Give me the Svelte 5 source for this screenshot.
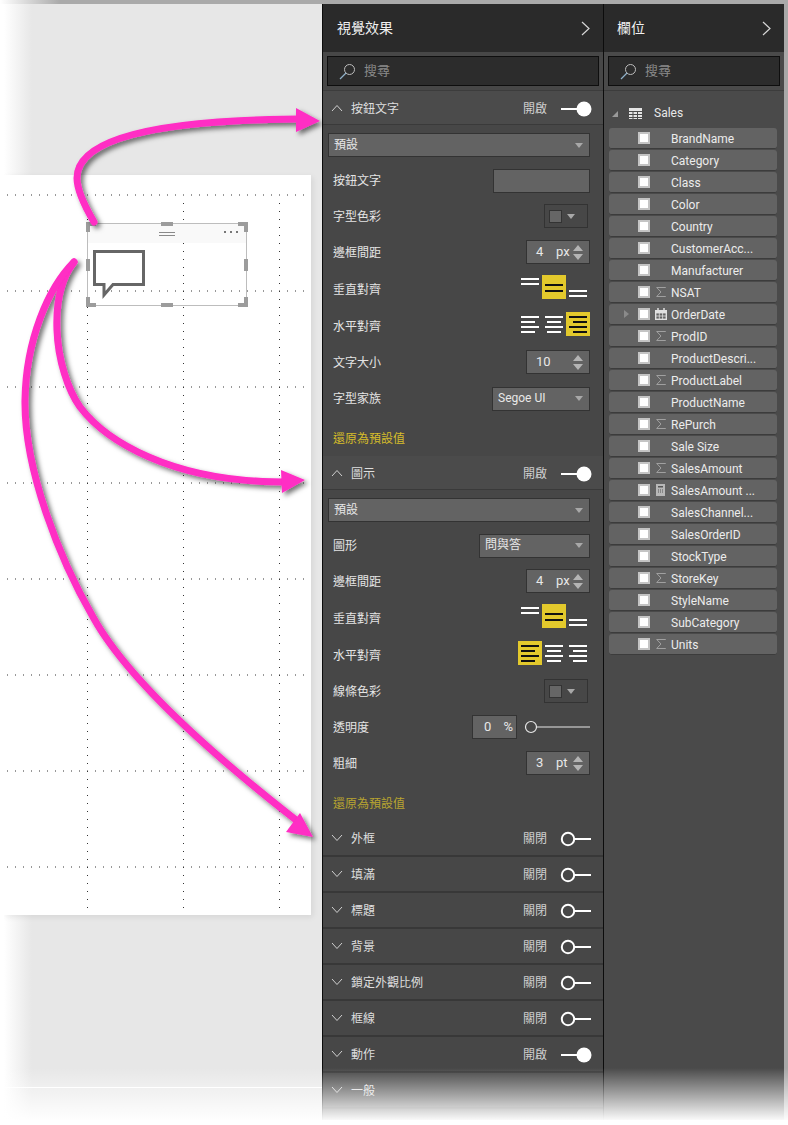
<script>
  const fields = [
    { name: "BrandName" }, { name: "Category" }, { name: "Class" }, { name: "Color" },
    { name: "Country" }, { name: "CustomerAcc..." }, { name: "Manufacturer" },
    { name: "NSAT", icon: "sum" }, { name: "OrderDate", icon: "cal", expand: true },
    { name: "ProdID", icon: "sum" }, { name: "ProductDescri..." },
    { name: "ProductLabel", icon: "sum" }, { name: "ProductName" },
    { name: "RePurch", icon: "sum" }, { name: "Sale Size" },
    { name: "SalesAmount", icon: "sum" }, { name: "SalesAmount ...", icon: "calc" },
    { name: "SalesChannel..." }, { name: "SalesOrderID" }, { name: "StockType" },
    { name: "StoreKey", icon: "sum" }, { name: "StyleName" }, { name: "SubCategory" },
    { name: "Units", icon: "sum" }
  ];

  const collapsed = [
    { title: "外框", on: false }, { title: "填滿", on: false }, { title: "標題", on: false },
    { title: "背景", on: false }, { title: "鎖定外觀比例", on: false }, { title: "框線", on: false },
    { title: "動作", on: true }, { title: "一般", hideToggle: true }
  ];

  const hDots = [195, 291, 387, 483, 579, 675, 771, 867];
  const vDots = [87.5, 183.5, 279.5];
</script>

{#snippet sectionHead(title, open, on, hideToggle)}
  <div class="section-head" class:open>
    <svg class="chev" width="12" height="8" viewBox="0 0 12 8">
      <path d={open ? "M1 7 L6 1.5 L11 7" : "M1 1 L6 6.5 L11 1"} fill="none" stroke="#d0d0d0" stroke-width="1" />
    </svg>
    <span class="section-title">{title}</span>
    {#if !hideToggle}
      <span class="state">{on ? "開啟" : "關閉"}</span>
      <svg class="toggle" width="32" height="16" viewBox="0 0 32 16">
        {#if on}
          <path d="M1 8 H18" stroke="#fff" stroke-width="2" />
          <circle cx="24" cy="8" r="7.5" fill="#fff" />
        {:else}
          <circle cx="8" cy="8" r="6.2" fill="none" stroke="#fff" stroke-width="2" />
          <path d="M14 8 H31" stroke="#fff" stroke-width="2" />
        {/if}
      </svg>
    {/if}
  </div>
{/snippet}

{#snippet caret()}
  <svg class="caret" width="8" height="5" viewBox="0 0 8 5"><path d="M0 0 H8 L4 5 Z" fill="#a8a8a8" /></svg>
{/snippet}

{#snippet search()}
  <div class="search">
    <svg width="17" height="17" viewBox="0 0 17 17">
      <circle cx="10.5" cy="6.5" r="5" fill="none" stroke="#bdbdbd" stroke-width="1" />
      <path d="M7 10 L1 16" stroke="#8fb0c8" stroke-width="1.2" />
    </svg>
    <span>搜尋</span>
  </div>
{/snippet}

{#snippet spinner(value, unit)}
  <div class="spinner">
    <span class="value">{value}</span>
    <span class="unit">{unit}</span>
    <svg class="updown" width="10" height="15" viewBox="0 0 10 15">
      <path d="M0 6 L5 0 L10 6 Z M0 9 H10 L5 15 Z" fill="#b4b4b4" />
    </svg>
  </div>
{/snippet}

{#snippet vAlign(active)}
  <div class="aligns">
    {#each ["top", "mid", "bot"] as pos, i}
      <span class="cell {pos}" class:active={active === i}><i></i><i></i></span>
    {/each}
  </div>
{/snippet}

{#snippet hAlign(active)}
  <div class="aligns">
    {#each ["left", "center", "right"] as pos, i}
      <span class="cell h {pos}" class:active={active === i}><i></i><i class="short"></i><i></i><i class="short"></i></span>
    {/each}
  </div>
{/snippet}

{#snippet colorPick()}
  <div class="color-pick"><span class="swatch"></span>{@render caret()}</div>
{/snippet}

<div class="shot">
  <div class="top-edge"></div>
  <div class="window">
    <div class="canvas">
      <div class="page">
        <svg class="dots" width="307" height="740" viewBox="4 175 307 740">
          {#each hDots as y}
            <line x1="7" x2="304" y1={y} y2={y} stroke="#333" stroke-width="1" stroke-dasharray="1 7" />
          {/each}
          {#each vDots as x}
            <line x1={x} x2={x} y1="203" y2="908" stroke="#333" stroke-width="1" stroke-dasharray="1 7" />
          {/each}
        </svg>
        <div class="visual">
          <div class="visual-bar">
            <span class="grip"></span>
            <span class="more"><i></i><i></i><i></i></span>
          </div>
          <svg class="bubble" width="54" height="54" viewBox="0 0 54 54">
            <path d="M1.5 1.5 H50.5 V34.5 H20 L11 45 V34.5 H1.5 Z" fill="#fff" stroke="#666" stroke-width="3" />
          </svg>
          <span class="handle tl"></span><span class="handle tr"></span>
          <span class="handle bl"></span><span class="handle br"></span>
          <span class="handle tm"></span><span class="handle bm"></span>
          <span class="handle lm"></span><span class="handle rm"></span>
        </div>
      </div>
      <div class="canvas-tabs"></div>
    </div>

    <div class="panel viz">
      <div class="panel-head">
        <span>視覺效果</span>
        <svg width="9" height="15" viewBox="0 0 9 15"><path d="M1 1 L8 7.5 L1 14" fill="none" stroke="#d6d6d6" stroke-width="1.2" /></svg>
      </div>
      {@render search()}
      <div class="panel-body">
        {@render sectionHead("按鈕文字", true, true)}
        <div class="group">
          <div class="select wide"><span>預設</span>{@render caret()}</div>
          <div class="row h35"><span>按鈕文字</span><div class="text-input"></div></div>
          <div class="row"><span>字型色彩</span>{@render colorPick()}</div>
          <div class="row"><span>邊框間距</span>{@render spinner("4", "px")}</div>
          <div class="row al"><span>垂直對齊</span>{@render vAlign(1)}</div>
          <div class="row al h38"><span>水平對齊</span>{@render hAlign(2)}</div>
          <div class="row"><span>文字大小</span>{@render spinner("10", "")}</div>
          <div class="row h37"><span>字型家族</span><div class="select font"><span>Segoe UI</span>{@render caret()}</div></div>
          <div class="reset">還原為預設值</div>
        </div>
        {@render sectionHead("圖示", true, true)}
        <div class="group">
          <div class="select wide"><span>預設</span>{@render caret()}</div>
          <div class="row h35"><span>圖形</span><div class="select shape"><span>問與答</span>{@render caret()}</div></div>
          <div class="row"><span>邊框間距</span>{@render spinner("4", "px")}</div>
          <div class="row al"><span>垂直對齊</span>{@render vAlign(1)}</div>
          <div class="row al h38"><span>水平對齊</span>{@render hAlign(0)}</div>
          <div class="row"><span>線條色彩</span>{@render colorPick()}</div>
          <div class="row">
            <span>透明度</span>
            <div class="opacity">
              <div class="percent"><span>0</span><span>%</span></div>
              <svg width="66" height="14" viewBox="0 0 66 14">
                <path d="M13 7 H66" stroke="#e8e8e8" stroke-width="1" />
                <circle cx="7" cy="7" r="5.5" fill="none" stroke="#e8e8e8" stroke-width="1.2" />
              </svg>
            </div>
          </div>
          <div class="row"><span>粗細</span>{@render spinner("3", "pt")}</div>
          <div class="reset dim">還原為預設值</div>
        </div>
        {#each collapsed as s}
          {@render sectionHead(s.title, false, s.on, s.hideToggle)}
        {/each}
      </div>
    </div>

    <div class="panel list">
      <div class="panel-head">
        <span>欄位</span>
        <svg width="9" height="15" viewBox="0 0 9 15"><path d="M1 1 L8 7.5 L1 14" fill="none" stroke="#d6d6d6" stroke-width="1.2" /></svg>
      </div>
      {@render search()}
      <div class="table-name">
        <svg class="tri" width="6" height="6" viewBox="0 0 6 6"><path d="M6 0 V6 H0 Z" fill="#999" /></svg>
        <svg width="13" height="11" viewBox="0 0 13 11">
          <path d="M0 0 H13 V11 H0 Z" fill="#e4e4e4" />
          <path d="M0 3.5 H13 M0 6.5 H13 M0 9.5 H13 M4 3 V11 M8.5 3 V11" stroke="#4a4a4a" stroke-width="1" />
        </svg>
        <span>Sales</span>
      </div>
      <ul class="fields">
        {#each fields as f (f.name)}
          <li>
            {#if f.expand}
              <svg class="expander" width="5" height="8" viewBox="0 0 5 8"><path d="M0 0 L5 4 L0 8 Z" fill="#8a8a8a" /></svg>
            {/if}
            <span class="check"></span>
            <span class="ficon">
              {#if f.icon === "sum"}
                <svg width="10" height="10" viewBox="0 0 10 10"><path d="M9.5 1 V0.5 H0.7 L5 5 L0.7 9.5 H9.5 V9" fill="none" stroke="#a0a0a0" stroke-width="1" /></svg>
              {:else if f.icon === "cal"}
                <svg width="12" height="12" viewBox="0 0 12 12">
                  <path d="M0 2 H12 V12 H0 Z" fill="#e0e0e0" />
                  <path d="M3 0 V2 M9 0 V2" stroke="#e0e0e0" stroke-width="1.5" />
                  <path d="M1 5 H11 V11 H1 Z M1 8 H11 M4.3 5 V11 M7.6 5 V11" fill="#636363" stroke="#e0e0e0" stroke-width="0.8" />
                </svg>
              {:else if f.icon === "calc"}
                <svg width="9" height="12" viewBox="0 0 9 12">
                  <path d="M0 0 H9 V12 H0 Z" fill="#b8b8b8" />
                  <path d="M2 2 H7 V3.5 H2 Z M2 5.5 H3 V6.5 H2 Z M4 5.5 H5 V6.5 H4 Z M6 5.5 H7 V6.5 H6 Z M2 7.5 H3 V8.5 H2 Z M4 7.5 H5 V8.5 H4 Z M6 7.5 H7 V8.5 H6 Z" fill="#555" />
                </svg>
              {/if}
            </span>
            <span class="fname">{f.name}</span>
          </li>
        {/each}
      </ul>
    </div>
  </div>
  <div class="right-edge"></div>
  <div class="bottom-fade"></div>

  <svg class="arrows" width="788" height="1125" viewBox="0 0 788 1125">
    <defs>
      <filter id="sh" x="-20%" y="-20%" width="140%" height="140%">
        <feDropShadow dx="3" dy="3" stdDeviation="2.5" flood-color="#000" flood-opacity="0.55" />
      </filter>
    </defs>
    <g filter="url(#sh)" fill="none" stroke="#ff2dc4" stroke-width="7" stroke-linecap="round">
      <path d="M94 222 C84 205 77 190 77 178 C77 140 150 120 298 119" />
      <path d="M74 262 C60 280 56 305 57 330 C58 360 68 390 80 407 C105 440 170 482 284 482" />
      <path d="M74 262 C48 288 26 340 25 400 C24 470 60 560 93 617 C125 675 200 745 296 820" />
      <path d="M296 108 L320 121 L296 132 Z" fill="#ff2dc4" stroke="none" />
      <path d="M281 470 L305 480 L282 493 Z" fill="#ff2dc4" stroke="none" />
      <path d="M300 813 L313 837 L286 832 Z" fill="#ff2dc4" stroke="none" />
    </g>
  </svg>
</div>

<style>
  :global(body) {
    margin: 0;
    background: #fff;
  }

  .shot {
    position: relative;
    width: 788px;
    height: 1125px;
    overflow: hidden;
    background: #fff;
    font: 12px/1.2 Roboto, "Noto Sans CJK TC", sans-serif;
    color: #e2e2e2;
  }

  .top-edge {
    height: 4px;
    background: linear-gradient(to right, #fff 0, #aaa 60px);
  }

  .window {
    display: flex;
    height: 1116px;
    margin-left: 4px;
    width: 780px;
    overflow: hidden;
  }

  .right-edge {
    position: absolute;
    top: 4px;
    right: 0;
    width: 4px;
    height: 1116px;
    background: #a8a8a8;
  }

  .bottom-fade {
    position: absolute;
    left: 0;
    right: 0;
    top: 1068px;
    height: 52px;
    background: linear-gradient(to bottom, rgba(255, 255, 255, 0), rgba(255, 255, 255, 0.97));
  }

  .arrows {
    position: absolute;
    inset: 0;
    pointer-events: none;
  }

  .canvas {
    position: relative;
    width: 318px;
    flex: none;
    padding-top: 171px;
    box-sizing: border-box;
    background: linear-gradient(to right, #fff 0, #e7e7e7 28px);
  }

  .canvas-tabs {
    position: absolute;
    left: 0;
    right: 0;
    top: 1083px;
    height: 1px;
    background: #fff;
  }

  .page {
    position: relative;
    width: 307px;
    height: 740px;
    background: #fff;
    box-shadow: 2px 2px 6px rgba(0, 0, 0, 0.08);
  }

  .dots {
    display: block;
  }

  .visual {
    position: absolute;
    left: 83px;
    top: 48px;
    width: 160px;
    height: 83px;
    box-sizing: border-box;
    border: 1px solid #bdbdbd;
  }

  .visual-bar {
    display: flex;
    align-items: center;
    justify-content: center;
    height: 19px;
    background: #f9f9f9;
    position: relative;
  }

  .grip {
    width: 16px;
    height: 2px;
    border-top: 1px solid #8a8a8a;
    border-bottom: 1px solid #8a8a8a;
  }

  .more {
    position: absolute;
    right: 8px;
    top: 7px;
    display: flex;
    gap: 4px;
  }

  .more i {
    width: 2px;
    height: 2px;
    background: #777;
  }

  .bubble {
    position: absolute;
    left: 5px;
    top: 26px;
  }

  .handle {
    position: absolute;
    background: #9c9c9c;
  }

  .handle.tl, .handle.tr, .handle.bl, .handle.br {
    width: 6px;
    height: 6px;
    background: none;
    border: 0 solid #9c9c9c;
  }

  .handle.tl { left: -2px; top: -2px; border-width: 4px 0 0 4px; }
  .handle.tr { right: -2px; top: -2px; border-width: 4px 4px 0 0; }
  .handle.bl { left: -2px; bottom: -2px; border-width: 0 0 4px 4px; }
  .handle.br { right: -2px; bottom: -2px; border-width: 0 4px 4px 0; }
  .handle.tm, .handle.bm { left: 73px; width: 12px; height: 4px; }
  .handle.tm { top: -2px; }
  .handle.bm { bottom: -2px; }
  .handle.lm, .handle.rm { top: 35px; width: 4px; height: 12px; }
  .handle.lm { left: -2px; }
  .handle.rm { right: -2px; }

  .panel {
    display: flex;
    flex-direction: column;
    flex: none;
    box-sizing: border-box;
    background: #474747;
    border-left: 1px solid #0c0c0c;
  }

  .viz {
    width: 281px;
  }

  .list {
    width: 181px;
    background: #4a4a4a;
  }

  .panel-head {
    display: flex;
    align-items: center;
    justify-content: space-between;
    flex: none;
    height: 48px;
    padding: 0 13px;
    background: #2a2a2a;
    font-size: 14px;
    color: #f0f0f0;
  }

  .viz .panel-head {
    padding-left: 14px;
  }

  .search {
    display: flex;
    align-items: center;
    gap: 8px;
    flex: none;
    height: 30px;
    margin: 4px;
    padding-left: 11px;
    box-sizing: border-box;
    background: #2c2c2c;
    border: 1px solid #0e0e0e;
    font-size: 13px;
    color: #8a8a8a;
  }

  .panel-body {
    border-top: 1px solid #3c3c3c;
  }

  .section-head {
    display: flex;
    align-items: center;
    height: 34px;
    padding: 0 11px 0 8px;
    border-bottom: 2px solid #383838;
    background: #474747;
  }

  .section-head.open {
    background: #4b4b4b;
    height: 32px;
    padding-top: 1px;
    border-bottom: 1px solid #3a3a3a;
  }

  .chev {
    flex: none;
    margin-right: 8px;
  }

  .section-title {
    flex: 1;
    padding-top: 2px;
    color: #dedede;
  }

  .state {
    margin-right: 13px;
    padding-top: 2px;
    color: #cfcfcf;
  }

  .toggle {
    flex: none;
    margin-top: 2px;
  }

  .group {
    padding: 8px 13px 0 5px;
  }

  .row {
    display: flex;
    align-items: center;
    justify-content: space-between;
    height: 36px;
    padding-left: 5px;
    color: #e4e4e4;
  }

  .row > span:first-child {
    padding-top: 2px;
  }

  .row.h35 { height: 35px; }
  .row.h37 { height: 37px; }
  .row.h38 { height: 38px; }

  .row.al > span:first-child {
    padding-top: 4px;
  }

  .select {
    display: flex;
    align-items: center;
    justify-content: space-between;
    box-sizing: border-box;
    height: 24px;
    padding: 0 6px 0 5px;
    background: #636363;
    border: 1px solid #333;
    color: #e8e8e8;
  }

  .select.wide {
    margin-bottom: 6px;
  }

  .select.font {
    width: 98px;
  }

  .select.shape {
    width: 111px;
  }

  .text-input {
    width: 97px;
    height: 24px;
    box-sizing: border-box;
    background: #636363;
    border: 1px solid #333;
  }

  .color-pick {
    display: flex;
    align-items: center;
    gap: 5px;
    width: 44px;
    height: 24px;
    box-sizing: border-box;
    margin-right: 2px;
    padding-left: 4px;
    border: 1px solid #333;
  }

  .swatch {
    width: 13px;
    height: 13px;
    box-sizing: border-box;
    background: #666;
    border: 1px solid #333;
  }

  .spinner {
    display: flex;
    align-items: center;
    width: 64px;
    height: 24px;
    box-sizing: border-box;
    padding-left: 9px;
    background: #636363;
    border: 1px solid #333;
    color: #e8e8e8;
    font-size: 13px;
  }

  .spinner .value {
    width: 20px;
  }

  .spinner .unit {
    width: 17px;
  }

  .updown {
    flex: none;
  }

  .aligns {
    display: flex;
    margin-top: -2px;
  }

  .cell {
    display: flex;
    flex-direction: column;
    gap: 3px;
    width: 24px;
    height: 24px;
    box-sizing: border-box;
    padding: 0 3px;
  }

  .cell i {
    display: block;
    height: 2px;
    background: #fff;
  }

  .cell.top { padding-top: 3px; }
  .cell.mid { padding-top: 9px; gap: 4px; }
  .cell.bot { padding-top: 15px; }

  .cell.h {
    padding-top: 4px;
    gap: 3px;
  }

  .cell.h i.short {
    width: 14px;
  }

  .cell.center { align-items: center; }
  .cell.center i { width: 18px; }
  .cell.right { align-items: flex-end; }
  .cell.right i { width: 18px; }
  .cell.left i { width: 18px; }

  .cell.active {
    background: #e3c92c;
  }

  .cell.active i {
    background: #111;
  }

  .opacity {
    display: flex;
    align-items: center;
    gap: 7px;
  }

  .percent {
    display: flex;
    justify-content: space-between;
    align-items: center;
    width: 45px;
    height: 24px;
    box-sizing: border-box;
    padding: 0 3px 0 11px;
    background: #636363;
    border: 1px solid #333;
    color: #e8e8e8;
    font-size: 13px;
  }

  .reset {
    height: 39px;
    padding: 15px 0 0 5px;
    box-sizing: border-box;
    color: #d6bd2a;
  }

  .reset.dim {
    height: 40px;
    padding-top: 16px;
    color: #b9a530;
  }

  .table-name {
    display: flex;
    align-items: center;
    height: 38px;
    box-sizing: border-box;
    padding: 8px 0 0 8px;
    color: #e8e8e8;
    border-top: 1px solid #3c3c3c;
  }

  .tri {
    margin-right: 11px;
  }

  .table-name span {
    margin-left: 12px;
  }

  .fields {
    margin: 0;
    padding: 0 7px 0 5px;
    list-style: none;
  }

  .fields li {
    position: relative;
    display: flex;
    align-items: center;
    height: 21px;
    margin-bottom: 1px;
    padding-left: 29px;
    background: #636363;
    border-radius: 3px;
    border-bottom: 1px solid #3c3c3c;
    box-sizing: border-box;
    color: #ececec;
  }

  .expander {
    position: absolute;
    left: 15px;
    top: 6px;
  }

  .check {
    flex: none;
    width: 12px;
    height: 12px;
    box-sizing: border-box;
    background: #fff;
    border: 2px solid #c4c4c4;
  }

  .ficon {
    display: flex;
    align-items: center;
    justify-content: center;
    flex: none;
    width: 21px;
  }

  .fname {
    white-space: nowrap;
    padding-top: 2px;
  }
</style>
